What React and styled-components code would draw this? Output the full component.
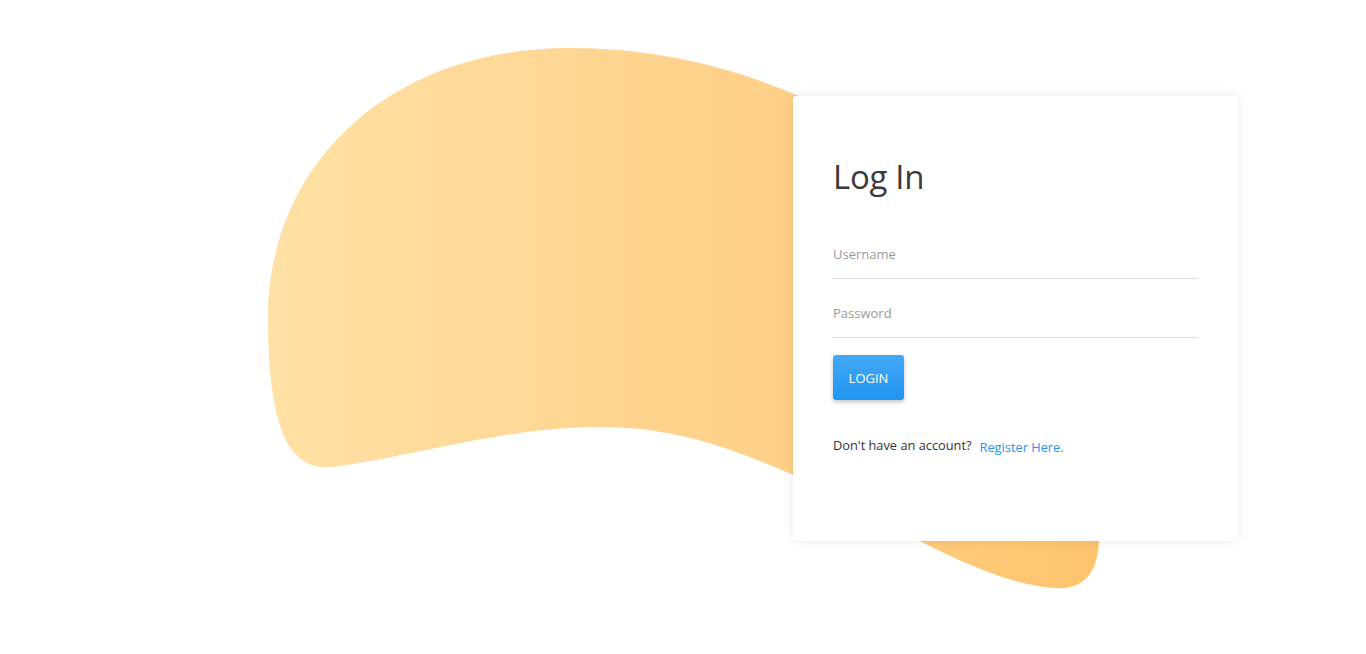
import styled, { createGlobalStyle } from 'styled-components';

const GlobalStyle = createGlobalStyle`
    html, body {
        margin: 0;
        padding: 0;
        background: #fff;
        font-family: "Open Sans", "Noto Sans", sans-serif;
    }
`;

const Page = styled.main`
    width: 1366px;
    height: 654px;
    overflow: hidden;
    padding-top: 48px;
    box-sizing: border-box;
`;

const Scene = styled.section`
    position: relative;
    margin-left: 267px;
    padding-top: 48px;
    width: 971px;
    height: 545px;
    box-sizing: border-box;
`;

const Blob = styled.svg`
    position: absolute;
    left: 0;
    top: 0;
    width: 840px;
    height: 545px;
`;

const Card = styled.div`
    position: relative;
    margin-left: 526px;
    width: 445px;
    height: 445px;
    box-sizing: border-box;
    padding: 58px 40px 0;
    background: #fff;
    border-radius: 3px;
    box-shadow: 0 0 12px rgba(0, 0, 0, 0.09);
`;

const Title = styled.h1`
    margin: 0 0 34px;
    font-family: "Open Sans", sans-serif;
    font-weight: 400;
    font-size: 33px;
    line-height: 46px;
    color: #3a3a3a;
    letter-spacing: -0.3px;
`;

const Input = styled.input`
    display: block;
    width: 100%;
    height: 45px;
    box-sizing: border-box;
    margin-bottom: ${props => props.gap || '14px'};
    padding: 0 0 4px;
    border: none;
    border-bottom: 1px solid #dcdcdc;
    outline: none;
    background: transparent;
    font-family: "Open Sans", sans-serif;
    font-size: 13px;
    color: #333;
    &::placeholder {
        color: #9a9a9a;
    }
`;

const Button = styled.button`
    display: block;
    width: 71px;
    height: 45px;
    border: none;
    border-radius: 3px;
    background: linear-gradient(to bottom, #44a8f6, #2095f2);
    box-shadow: 0 2px 4px rgba(0, 0, 0, 0.25);
    color: #fff;
    font-family: "Open Sans", sans-serif;
    font-size: 13px;
    cursor: pointer;
`;

const Footer = styled.p`
    margin: 35px 0 0;
    display: flex;
    align-items: baseline;
    font-size: 12.8px;
    line-height: 20px;
    color: #333;
`;

const Link = styled.a`
    margin-left: 8px;
    color: #2196f3;
    text-decoration: none;
    position: relative;
    top: 2px;
`;

function App() {
    return (
        <Page>
            <GlobalStyle />
            <Scene>
                <Blob viewBox="267 48 840 545" aria-hidden="true">
                    <defs>
                        <linearGradient id="blobFill" x1="0" y1="0" x2="1" y2="0">
                            <stop offset="0" stopColor="#fee1a5" />
                            <stop offset="0.6" stopColor="#fed088" />
                            <stop offset="1" stopColor="#fec46d" />
                        </linearGradient>
                    </defs>
                    <path
                        fill="url(#blobFill)"
                        d="M 570 48
                           C 680 48, 790 80, 890 145
                           C 1010 225, 1102 400, 1099 540
                           C 1098 575, 1082 590, 1055 588
                           C 990 585, 900 530, 800 478
                           C 720 442, 665 427, 600 427
                           C 500 427, 400 460, 330 467
                           C 285 470, 270 420, 268 330
                           C 262 170, 385 48, 570 48 Z"
                    />
                </Blob>
                <Card>
                    <Title>Log In</Title>
                    <Input type="text" placeholder="Username" />
                    <Input type="password" placeholder="Password" gap="17px" />
                    <Button>LOGIN</Button>
                    <Footer>
                        Don't have an account?
                        <Link href="#">Register Here.</Link>
                    </Footer>
                </Card>
            </Scene>
        </Page>
    );
}

export default App;
